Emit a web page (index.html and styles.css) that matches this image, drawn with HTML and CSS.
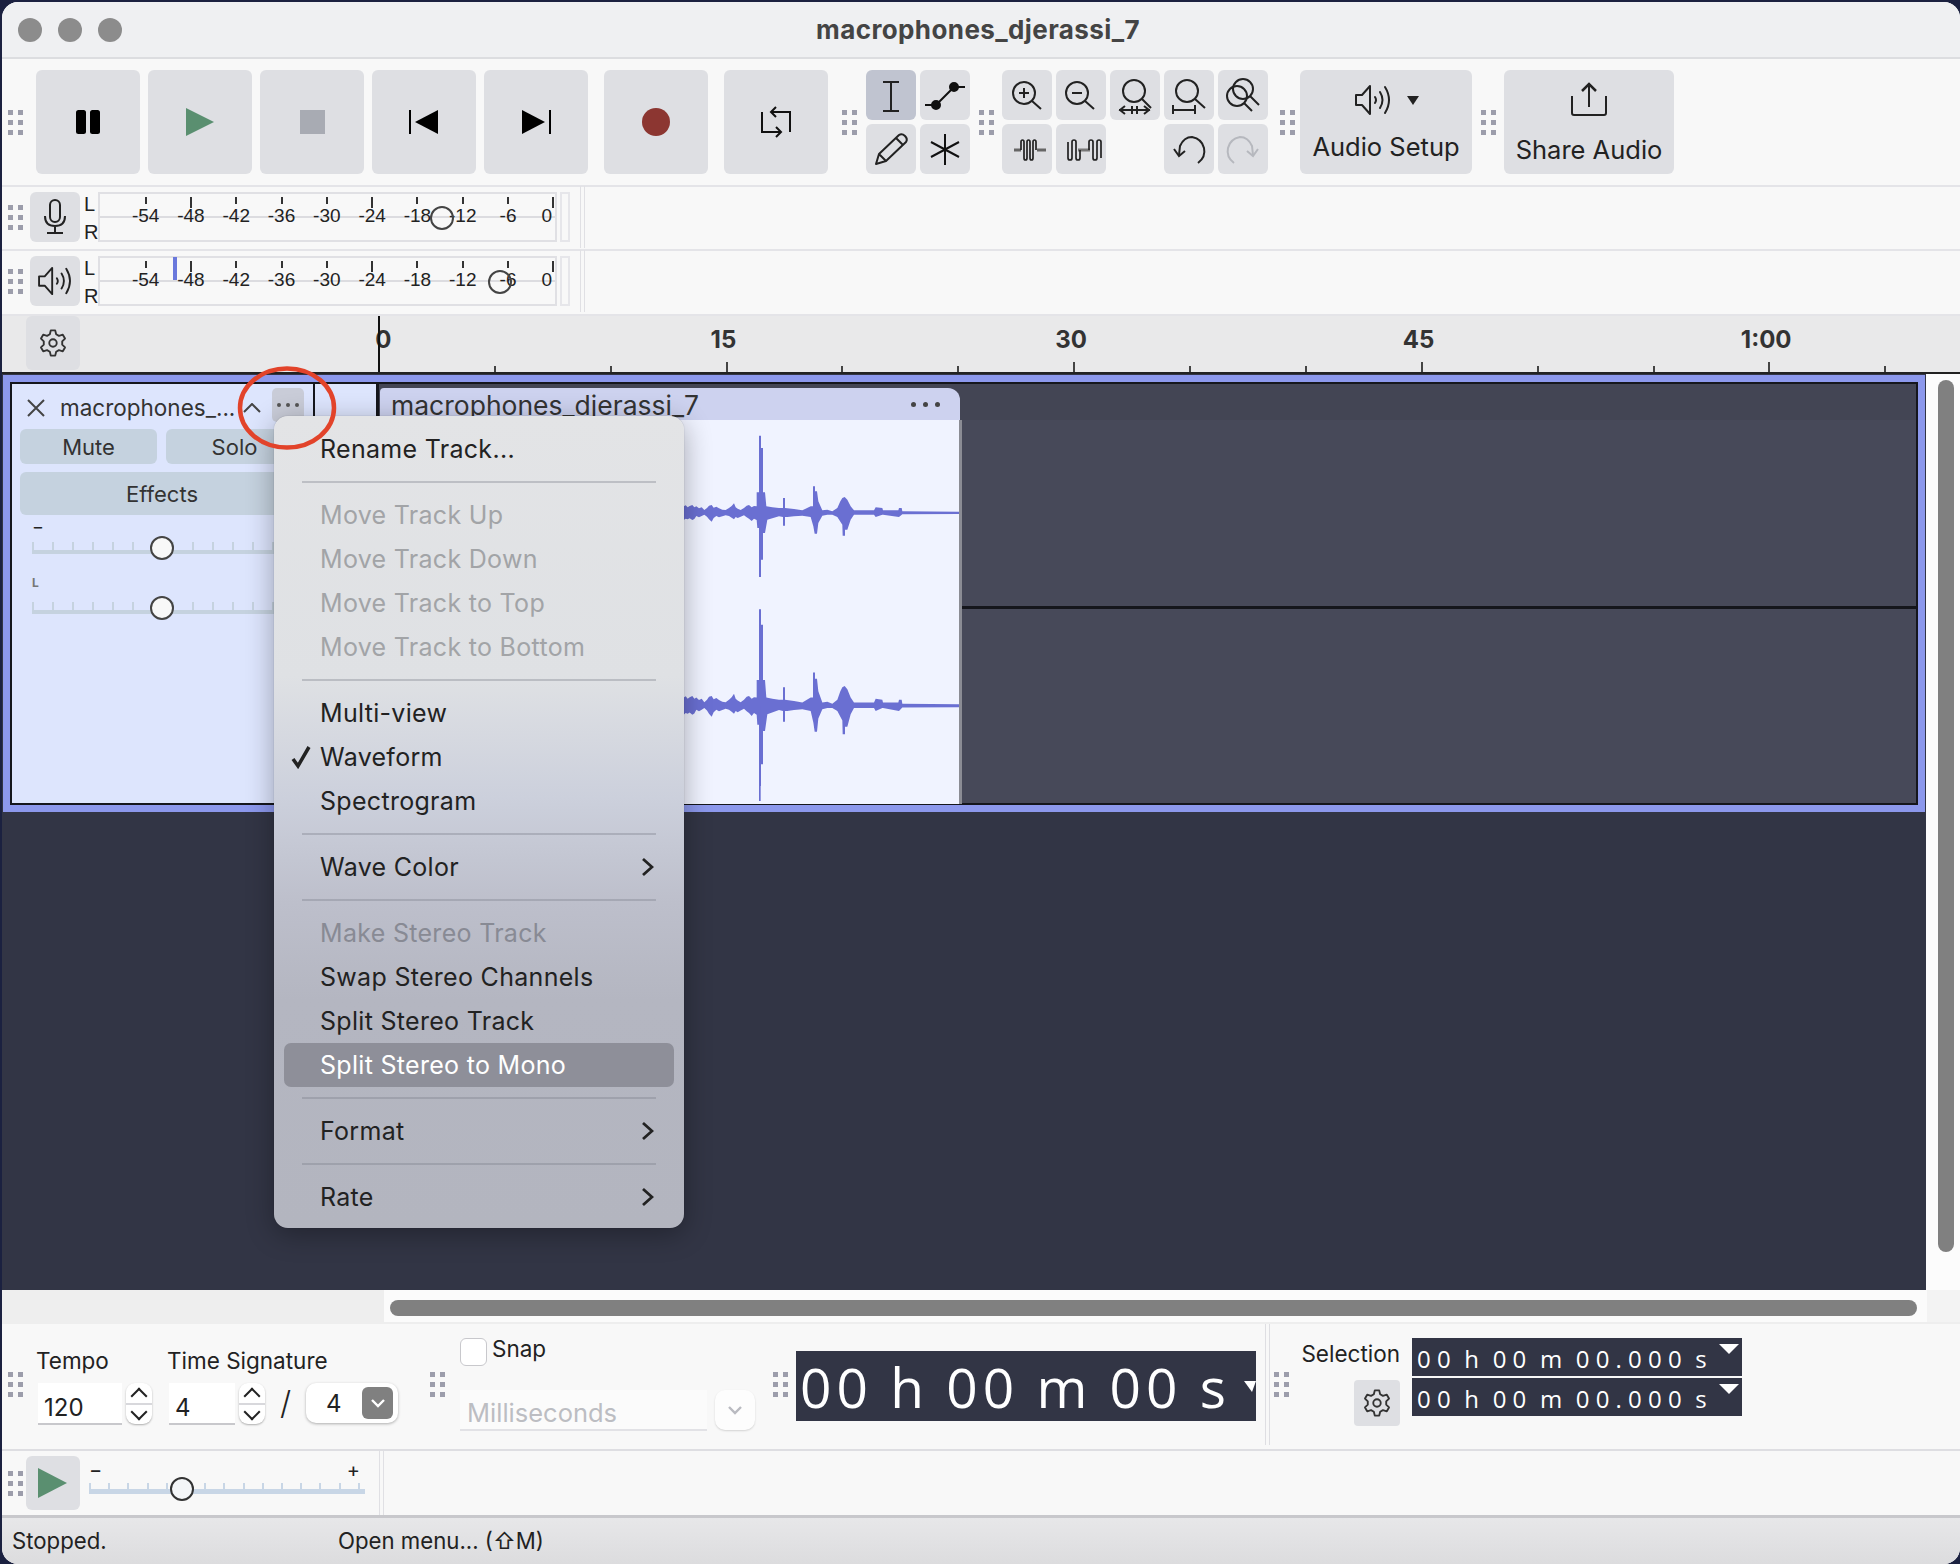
FILE: index.html
```html
<!DOCTYPE html>
<html lang="en">
<head>
    <meta charset="UTF-8">
    <title>macrophones_djerassi_7</title>
    <link rel="stylesheet" href="styles.css">
</head>
<body>

    <!-- Shared icons -->
    <svg class="defs" width="0" height="0">
        <symbol id="gear" viewBox="0 0 24 24">
            <polygon points="10.1,1.2 13.9,1.2 14.7,4.5 17.1,5.9 20.4,4.9 22.3,8.2 19.9,10.6 19.9,13.4 22.3,15.8 20.4,19.1 17.1,18.1 14.7,19.5 13.9,22.8 10.1,22.8 9.3,19.5 6.9,18.1 3.6,19.1 1.7,15.8 4.1,13.4 4.1,10.6 1.7,8.2 3.6,4.9 6.9,5.9 9.3,4.5" fill="none" stroke="#333" stroke-width="1.6" stroke-linejoin="round"/>
            <circle cx="12" cy="12" r="3.2" fill="none" stroke="#333" stroke-width="1.6"/>
        </symbol>
        <symbol id="speaker" viewBox="0 0 36 32">
            <path d="M1 11h6l8-9v28l-8-9H1z" fill="none" stroke="#222" stroke-width="2" stroke-linejoin="round"/>
            <path d="M20 13q2 3 0 6M25 8q5 8 0 16M30 3q8 13 0 26" fill="none" stroke="#222" stroke-width="2" stroke-linecap="round"/>
        </symbol>
        <symbol id="wave" viewBox="0 0 840 585">
            <polygon fill="#6a6fd2" points="0,261 6,258 10,263 14,259 20,256 26,262 32,258 40,255 46,262 52,259 60,265 68,262 76,270 84,264 90,257 98,255 104,263 112,260 120,265 130,269 140,270 150,264 158,258 165,250 170,262 176,266 185,270 195,264 203,257 210,255 218,262 225,258 233,259 233,217 240,217 240,47 246,47 246,84 252,84 252,217 258,217 262,259 280,262 300,264 312,264 312,234 318,234 318,264 345,267 370,271 395,259 402,259 402,199 408,199 408,214 414,214 418,244 430,271 445,269 460,274 475,264 484,244 490,234 497,231 505,239 515,259 525,271 585,271 590,262 610,264 612,271 658,271 660,264 668,264 670,274 840,275 840,282 670,283 660,291 612,284 610,284 590,291 585,284 525,284 515,299 505,329 498,329 498,347 491,347 490,314 475,291 460,284 445,284 430,287 418,309 414,341 407,341 403,319 395,291 370,287 345,289 325,291 318,291 318,317 312,317 312,291 300,289 265,299 258,339 252,339 252,419 246,419 246,471 240,471 240,324 235,324 233,300 225,296 218,303 210,296 203,292 195,286 185,290 176,294 170,291 165,298 158,293 150,288 140,286 130,289 120,292 112,288 104,294 98,305 90,298 84,290 76,284 68,288 60,292 52,288 46,297 40,300 32,295 26,298 20,296 14,300 10,295 6,298 0,297"/>
        </symbol>
        <symbol id="chevron" viewBox="0 0 13 20">
            <path d="M2 2l9 8-9 8" fill="none" stroke="#222" stroke-width="2.8"/>
        </symbol>
    </svg>

    <div class="window">

        <div class="titlebar">
            <div class="lights"><span></span><span></span><span></span></div>
            <div class="title">macrophones_djerassi_7</div>
        </div>

        <!-- Main toolbar -->
        <div class="toolbar">
            <div class="grip first-grip"></div>
            <div class="transport">
                <div class="tbtn">
                    <svg width="24" height="24" viewBox="0 0 24 24"><rect x="0" width="10" height="24" rx="2.5"/><rect x="14" width="10" height="24" rx="2.5"/></svg>
                </div>
                <div class="tbtn">
                    <svg width="28" height="28" viewBox="0 0 28 28"><polygon points="0,0 28,14 0,28" fill="#5a8f70"/></svg>
                </div>
                <div class="tbtn">
                    <svg width="25" height="24" viewBox="0 0 25 24"><rect width="25" height="24" fill="#a8abb3"/></svg>
                </div>
                <div class="tbtn">
                    <svg width="30" height="24" viewBox="0 0 30 24"><rect width="2" height="24"/><polygon points="6,12 29,0 29,24"/></svg>
                </div>
                <div class="tbtn">
                    <svg width="30" height="24" viewBox="0 0 30 24"><polygon points="1,0 24,12 1,24"/><rect x="28" width="2" height="24"/></svg>
                </div>
                <div class="tbtn spaced">
                    <svg width="28" height="28" viewBox="0 0 28 28"><circle cx="14" cy="14" r="14" fill="#8c3631"/></svg>
                </div>
                <div class="tbtn spaced">
                    <svg width="30" height="32" viewBox="0 0 30 32" fill="none" stroke="#111" stroke-width="2">
                        <path d="M11 6h18v20M19 26H1V6"/>
                        <path d="M15 1l-5 5 5 5M15 21l5 5-5 5"/>
                    </svg>
                </div>
            </div>

            <div class="grip tools-grip"></div>
            <div class="tools">
                <div class="sbtn active">
                    <svg width="50" height="50" viewBox="0 0 50 50" fill="none" stroke="#222" stroke-width="2"><path d="M25 13v28M17 12h16M17 41h16"/></svg>
                </div>
                <div class="sbtn">
                    <svg width="50" height="50" viewBox="0 0 50 50" fill="none" stroke="#111" stroke-width="2"><path d="M16 35l18-18M5 35h11M34 17h11"/><circle cx="16" cy="35" r="4" fill="#111"/><circle cx="34" cy="17" r="4" fill="#111"/></svg>
                </div>
                <div class="sbtn">
                    <svg width="50" height="50" viewBox="0 0 50 50" fill="none" stroke="#222" stroke-width="2" stroke-linejoin="round"><path d="M10 40l3-10 20-19q3-2 6 1t1 6L20 37zM13 30l7 7M30 14l7 7"/></svg>
                </div>
                <div class="sbtn">
                    <svg width="50" height="50" viewBox="0 0 50 50" fill="none" stroke="#111" stroke-width="2"><path d="M25 10v31M11 18l28 15M39 18L11 33"/></svg>
                </div>
            </div>

            <div class="grip tools-grip"></div>
            <div class="zooms">
                <div class="sbtn">
                    <svg width="50" height="50" viewBox="0 0 50 50" fill="none" stroke="#222" stroke-width="2"><circle cx="22" cy="23" r="11"/><path d="M30 31l9 8M17 23h10M22 18v10"/></svg>
                </div>
                <div class="sbtn">
                    <svg width="50" height="50" viewBox="0 0 50 50" fill="none" stroke="#222" stroke-width="2"><circle cx="21" cy="23" r="11"/><path d="M29 31l9 8M16 23h10"/></svg>
                </div>
                <div class="sbtn">
                    <svg width="50" height="50" viewBox="0 0 50 50" fill="none" stroke="#222" stroke-width="2"><circle cx="24" cy="21" r="11"/><path d="M32 29l9 9M9 40h31M15 36l-5 4 5 4M34 36l5 4-5 4M22 36v8M27 36v8"/></svg>
                </div>
                <div class="sbtn">
                    <svg width="50" height="50" viewBox="0 0 50 50" fill="none" stroke="#222" stroke-width="2"><circle cx="23" cy="21" r="11"/><path d="M31 29l10 9M9 40h22M9 35v9M31 35v9"/></svg>
                </div>
                <div class="sbtn">
                    <svg width="50" height="50" viewBox="0 0 50 50" fill="none" stroke="#222" stroke-width="2"><circle cx="25" cy="19" r="10"/><circle cx="19" cy="26" r="10"/><path d="M32 26l9 9M26 33l8 8"/></svg>
                </div>
                <div class="sbtn">
                    <svg width="50" height="50" viewBox="0 0 50 50" fill="none" stroke="#222" stroke-width="1.700"><path d="M12 26h7M35 26h9" stroke="#666" stroke-width="3"/><path d="M19 26v-8q0-2 1.500-2t1.500 2v16q0 2 1.500 2t1.500-2V18q0-2 1.500-2t1.500 2v16q0 2 1.500 2t1.500-2V18q0-2 1.500-2t1.500 2v8"/></svg>
                </div>
                <div class="sbtn">
                    <svg width="50" height="50" viewBox="0 0 50 50" fill="none" stroke="#222" stroke-width="1.700"><path d="M22 26h12" stroke="#777" stroke-width="3"/><path d="M12 18v16q0 2 2 2t2-2V18q0-2 2-2t2 2v16q0 2 2 2t2-2v-8M33 26v-8q0-2 2-2t2 2v16q0 2 2 2t2-2V18q0-2 2-2t2 2v16"/></svg>
                </div>
                <div class="sbtn empty"></div>
                <div class="sbtn">
                    <svg width="50" height="50" viewBox="0 0 50 50" fill="none" stroke="#222" stroke-width="2"><path d="M34 39q8-6 6-15T28 13q-8 0-12 9l-1 9"/><path d="M10 25l5 7 6-5"/></svg>
                </div>
                <div class="sbtn">
                    <svg width="50" height="50" viewBox="0 0 50 50" fill="none" stroke="#b6b8be" stroke-width="2"><path d="M16 39q-8-6-6-15t12-11q8 0 12 9l1 9"/><path d="M40 25l-5 7-6-5"/></svg>
                </div>
            </div>

            <div class="grip audio-grip"></div>
            <div class="wide-btn audio-btn">
                <div class="wide-icon">
                    <svg width="40" height="32"><use href="#speaker"/></svg>
                    <span class="caret"></span>
                </div>
                <div>Audio Setup</div>
            </div>
            <div class="grip share-grip"></div>
            <div class="wide-btn share-btn">
                <div class="wide-icon">
                    <svg width="36" height="36" viewBox="0 0 36 36" fill="none" stroke="#222" stroke-width="2"><path d="M1 15v17q0 2 2 2h30q2 0 2-2V15"/><path d="M18 26V3"/><path d="M11 10l7-7 7 7" stroke-width="2.5"/></svg>
                </div>
                <div>Share Audio</div>
            </div>
        </div>

        <!-- Recording and playback meters -->
        <div class="meter-row">
            <div class="grip first-grip"></div>
            <div class="meter-btn">
                <svg width="22" height="36" viewBox="0 0 22 36" fill="none" stroke="#222" stroke-width="2"><rect x="6" y="1" width="10" height="22" rx="5"/><path d="M1 17q0 10 10 10t10-10M11 27v6M3 34h16"/></svg>
            </div>
            <div class="lr"><span>L</span><span>R</span></div>
            <div class="meter">
                <div class="mark"><i></i><span>-54</span></div>
                <div class="mark"><i class="long"></i><span>-48</span></div>
                <div class="mark"><i></i><span>-42</span></div>
                <div class="mark"><i></i><span>-36</span></div>
                <div class="mark"><i></i><span>-30</span></div>
                <div class="mark"><i class="long"></i><span>-24</span></div>
                <div class="mark"><i></i><span>-18</span></div>
                <div class="mark"><i></i><span>-12</span></div>
                <div class="mark"><i></i><span>-6</span></div>
                <div class="mark last"><i class="long"></i><span>0</span></div>
                <div class="meter-thumb input-gain"></div>
            </div>
            <div class="mini-meter"></div>
            <div class="meter-sep"></div>
        </div>
        <div class="meter-row second">
            <div class="grip first-grip"></div>
            <div class="meter-btn">
                <svg width="34" height="30"><use href="#speaker"/></svg>
            </div>
            <div class="lr"><span>L</span><span>R</span></div>
            <div class="meter">
                <div class="level-bar"></div>
                <div class="mark"><i></i><span>-54</span></div>
                <div class="mark"><i class="long"></i><span>-48</span></div>
                <div class="mark"><i></i><span>-42</span></div>
                <div class="mark"><i></i><span>-36</span></div>
                <div class="mark"><i></i><span>-30</span></div>
                <div class="mark"><i class="long"></i><span>-24</span></div>
                <div class="mark"><i></i><span>-18</span></div>
                <div class="mark"><i></i><span>-12</span></div>
                <div class="mark"><i></i><span>-6</span></div>
                <div class="mark last"><i class="long"></i><span>0</span></div>
                <div class="meter-thumb output-gain"></div>
            </div>
            <div class="mini-meter"></div>
            <div class="meter-sep"></div>
        </div>

        <!-- Timeline ruler -->
        <div class="ruler">
            <div class="gear-btn"><svg width="28" height="28"><use href="#gear"/></svg></div>
            <div class="ruler-labels">
                <span class="zero">0</span>
                <span>15</span>
                <span>30</span>
                <span>45</span>
                <span>1:00</span>
            </div>
            <div class="ruler-ticks"></div>
        </div>

        <!-- Track area -->
        <div class="main">
            <div class="tracks">
                <div class="track">
                    <div class="track-inner">
                        <div class="panel">
                            <div class="panel-head">
                                <svg class="close-x" width="18" height="18" viewBox="0 0 18 18" stroke="#444" stroke-width="2"><path d="M1 1l16 16M17 1L1 17"/></svg>
                                <span class="track-name">macrophones_...</span>
                                <svg class="collapse" width="18" height="10" viewBox="0 0 18 10" fill="none" stroke="#444" stroke-width="2"><path d="M1 9l8-8 8 8"/></svg>
                                <div class="more-btn"><span></span><span></span><span></span></div>
                                <div class="panel-rule"></div>
                            </div>
                            <div class="panel-btns">
                                <div class="pbtn">Mute</div>
                                <div class="pbtn">Solo</div>
                            </div>
                            <div class="pbtn effects">Effects</div>
                            <div class="slider-label">&minus;</div>
                            <div class="pslider"><div class="pthumb"></div></div>
                            <div class="slider-label pan">L</div>
                            <div class="pslider"><div class="pthumb"></div></div>
                        </div>
                        <div class="lane">
                            <div class="clip">
                                <div class="clip-head">
                                    <span>macrophones_djerassi_7</span>
                                    <div class="clip-dots"><span></span><span></span><span></span></div>
                                </div>
                                <div class="clip-body">
                                    <div class="channel"><svg width="280" height="195"><use href="#wave"/></svg></div>
                                    <div class="channel lower">
                                        <svg width="280" height="195" viewBox="0 0 840 585">
                                            <use href="#wave" width="840" height="585" transform="translate(0 -58) scale(1 1.25)"/>
                                            <rect x="240" y="291" width="5" height="285" fill="#6a6fd2"/>
                                        </svg>
                                    </div>
                                </div>
                            </div>
                        </div>
                    </div>
                </div>
            </div>
            <div class="vscroll"><div class="vthumb"></div></div>
        </div>

        <div class="hscroll">
            <div class="hscroll-left"></div>
            <div class="hscroll-track"><div class="hthumb"></div></div>
        </div>

        <!-- Bottom toolbar -->
        <div class="bottom">
            <div class="grip first-grip"></div>
            <div class="field tempo">
                <label>Tempo</label>
                <div class="field-row">
                    <div class="num wide">120</div>
                    <div class="spin"><span class="up"></span><span class="down"></span></div>
                </div>
            </div>
            <div class="field timesig">
                <label>Time Signature</label>
                <div class="field-row">
                    <div class="num">4</div>
                    <div class="spin"><span class="up"></span><span class="down"></span></div>
                    <div class="slash">/</div>
                    <div class="select">
                        <span>4</span>
                        <div class="select-arrow"><svg width="14" height="9" viewBox="0 0 14 9" fill="none" stroke="#fff" stroke-width="2.4"><path d="M1 1l6 6 6-6"/></svg></div>
                    </div>
                </div>
            </div>
            <div class="grip snap-grip"></div>
            <div class="snap">
                <div class="snap-check"><span class="box"></span><span>Snap</span></div>
                <div class="snap-row">
                    <div class="snap-select">Milliseconds</div>
                    <div class="snap-arrow"><svg width="14" height="9" viewBox="0 0 14 9" fill="none" stroke="#b9bac0" stroke-width="2.4"><path d="M1 1l6 6 6-6"/></svg></div>
                </div>
            </div>
            <div class="grip clock-grip"></div>
            <div class="clock"><span class="clock-text">00 h 00 m 00 s</span><span class="clock-caret"></span></div>
            <div class="bottom-sep"></div>
            <div class="grip sel-grip"></div>
            <div class="selection">
                <div class="sel-side">
                    <div class="sel-label">Selection</div>
                    <div class="sel-gear"><svg width="28" height="28"><use href="#gear"/></svg></div>
                </div>
                <div class="sel-clocks">
                    <div class="small-clock"><span>00 h 00 m 00.000 s</span><i class="clock-caret small"></i></div>
                    <div class="small-clock"><span>00 h 00 m 00.000 s</span><i class="clock-caret small"></i></div>
                </div>
            </div>
        </div>

        <!-- Play at speed -->
        <div class="speed-row">
            <div class="grip speed-grip"></div>
            <div class="speed-btn">
                <svg width="30" height="30" viewBox="0 0 30 30"><polygon points="0,0 29,15 0,30" fill="#5a8f70"/></svg>
            </div>
            <div class="speed-slider">
                <div class="speed-signs"><span>&minus;</span><span>+</span></div>
                <div class="speed-track"><div class="speed-thumb"></div></div>
            </div>
            <div class="speed-sep"></div>
        </div>

        <div class="statusbar">
            <span class="status-left">Stopped.</span>
            <span>Open menu... (⇧M)</span>
        </div>

        <!-- Track context menu -->
        <div class="menu">
            <div class="item">Rename Track...</div>
            <div class="sep"></div>
            <div class="item off">Move Track Up</div>
            <div class="item off">Move Track Down</div>
            <div class="item off">Move Track to Top</div>
            <div class="item off">Move Track to Bottom</div>
            <div class="sep"></div>
            <div class="item">Multi-view</div>
            <div class="item">
                <svg class="check" width="22" height="24" viewBox="0 0 22 24" fill="none" stroke="#222" stroke-width="3.5"><path d="M3 14l5 7L19 2"/></svg>
                Waveform
            </div>
            <div class="item">Spectrogram</div>
            <div class="sep"></div>
            <div class="item sub">Wave Color<svg width="13" height="20"><use href="#chevron"/></svg></div>
            <div class="sep"></div>
            <div class="item off dim">Make Stereo Track</div>
            <div class="item">Swap Stereo Channels</div>
            <div class="item">Split Stereo Track</div>
            <div class="item hot">Split Stereo to Mono</div>
            <div class="sep"></div>
            <div class="item sub">Format<svg width="13" height="20"><use href="#chevron"/></svg></div>
            <div class="sep"></div>
            <div class="item sub">Rate<svg width="13" height="20"><use href="#chevron"/></svg></div>
        </div>

        <!-- Red annotation ring -->
        <svg class="ring" width="104" height="88" viewBox="0 0 104 88"><ellipse cx="52" cy="44" rx="47" ry="39.500" fill="none" stroke="#e2432a" stroke-width="4.500"/></svg>

    </div>

</body>
</html>
```

FILE: styles.css
```css
/* Page and window */
* {
    box-sizing: border-box;
}
html, body {
    margin: 0;
    height: 100%;
}
body {
    background: #1b2140;
    padding: 2px 0 0 2px;
    width: 1960px;
    height: 1564px;
    overflow: hidden;
    font-family: Inter, "Liberation Sans", sans-serif;
    color: #222;
}
.defs {
    position: absolute;
}
.window {
    position: relative;
    width: 1958px;
    height: 1562px;
    display: flex;
    flex-direction: column;
    background: #f8f8f8;
    border-radius: 16px;
    overflow: hidden;
}

/* Title bar */
.titlebar {
    height: 57px;
    flex: none;
    display: flex;
    align-items: center;
    padding-left: 16px;
    background: #eff0f2;
    border-bottom: 2px solid #dcdde0;
}
.lights {
    display: flex;
    gap: 16px;
}
.lights span {
    width: 24px;
    height: 24px;
    border-radius: 50%;
    background: #8c8c8c;
}
.title {
    flex: 1;
    padding-right: 126px;
    text-align: center;
    font-size: 26px;
    font-weight: 700;
    letter-spacing: 0.4px;
    color: #444;
}

/* Drag grips */
.grip {
    flex: none;
    width: 15px;
    height: 25px;
    background: conic-gradient(#9c9dab 25%, transparent 0) -5px 0 / 10px 10px;
}
.first-grip {
    margin-left: 6px;
}

/* Main toolbar */
.toolbar {
    height: 128px;
    flex: none;
    display: flex;
    align-items: center;
    border-bottom: 2px solid #e4e4e8;
}
.transport {
    display: flex;
    gap: 8px;
    margin-left: 13px;
}
.tbtn {
    width: 104px;
    height: 104px;
    display: flex;
    align-items: center;
    justify-content: center;
    background: #dedfe3;
    border-radius: 6px;
}
.tbtn.spaced {
    margin-left: 8px;
}
.tools-grip {
    margin-left: 14px;
}
.tools {
    display: grid;
    grid-template-columns: 50px 50px;
    gap: 4px;
    margin-left: 9px;
}
.tools + .grip {
    margin-left: 9px;
}
.zooms {
    display: grid;
    grid-template-columns: repeat(5, 50px);
    gap: 4px;
    margin-left: 8px;
}
.sbtn {
    width: 50px;
    height: 50px;
    background: #dedfe3;
    border-radius: 6px;
}
.sbtn svg {
    display: block;
}
.sbtn.active {
    background: #c0c4d0;
}
.sbtn.empty {
    background: none;
}
.audio-grip {
    margin-left: 12px;
}
.share-grip {
    margin-left: 9px;
}
.wide-btn {
    height: 104px;
    display: flex;
    flex-direction: column;
    align-items: center;
    justify-content: space-between;
    padding: 12px 0 12px;
    background: #dedfe3;
    border-radius: 6px;
    font-size: 25.500px;
    color: #222;
}
.audio-btn {
    width: 172px;
    margin-left: 5px;
}
.share-btn {
    width: 170px;
    margin-left: 8px;
    padding-top: 11px;
    padding-bottom: 9px;
}
.wide-icon {
    display: flex;
    align-items: center;
    gap: 14px;
    height: 36px;
}
.wide-icon svg {
    display: block;
}
.caret {
    width: 0;
    height: 0;
    border-left: 6px solid transparent;
    border-right: 6px solid transparent;
    border-top: 9px solid #222;
}

/* Meters */
.meter-row {
    height: 64px;
    flex: none;
    display: flex;
    align-items: center;
    border-bottom: 2px solid #e4e4e8;
    padding-bottom: 2px;
}
.meter-row.second {
    height: 65px;
    padding-bottom: 3px;
}
.meter-btn {
    width: 50px;
    height: 50px;
    margin-left: 7px;
    display: flex;
    align-items: center;
    justify-content: center;
    background: #dedfe3;
    border-radius: 6px;
}
.lr {
    width: 14px;
    height: 50px;
    margin-left: 4px;
    display: flex;
    flex-direction: column;
    justify-content: space-between;
    font-family: "Liberation Sans", sans-serif;
    font-size: 20px;
    line-height: 25px;
}
.lr span:last-child {
    margin-top: 3px;
}
.meter {
    position: relative;
    width: 459px;
    height: 50px;
    display: flex;
    padding-left: 23px;
    border: 2px solid #e0e0e4;
    background: linear-gradient(#dcdce0 0 0) 0 22px / 100% 2px no-repeat;
}
.mark {
    width: 45.3px;
    flex: none;
    display: flex;
    flex-direction: column;
    align-items: center;
    font-family: "Liberation Sans", sans-serif;
    font-size: 19px;
}
.mark i {
    width: 2px;
    height: 7px;
    margin-top: 3px;
    background: #333;
}
.mark i.long {
    height: 11px;
}
.mark span {
    position: relative;
    line-height: 22px;
    top: 10px;
}
.mark i + span {
    top: 1px;
}
.mark i.long + span {
    top: -3px;
}
.mark.last span {
    margin-right: 13px;
}
.meter-thumb {
    position: absolute;
    top: 12px;
    width: 24px;
    height: 24px;
    border: 2px solid #444;
    border-radius: 50%;
}
.input-gain {
    left: 330px;
}
.output-gain {
    left: 388px;
}
.level-bar {
    position: absolute;
    left: 73px;
    top: -1px;
    width: 4px;
    height: 23px;
    background: #6a78dc;
}
.mini-meter {
    width: 10px;
    height: 50px;
    margin-left: 3px;
    border: 2px solid #e6e6ea;
}
.meter-sep {
    width: 5px;
    height: 62px;
    margin-left: 10px;
    border-left: 1px solid #e0e0e4;
    border-right: 1px solid #e0e0e4;
}

/* Ruler */
.ruler {
    position: relative;
    height: 58px;
    flex: none;
    display: flex;
    background: #e9e9ea;
    border-bottom: 2px solid #222;
    overflow: hidden;
}
.gear-btn {
    width: 54px;
    height: 54px;
    margin-left: 24px;
    flex: none;
    display: flex;
    align-items: center;
    justify-content: center;
    background: #dedfe3;
    border-radius: 6px;
}
.ruler-labels {
    display: flex;
    margin-left: 122px;
    padding-top: 9px;
    font-size: 24px;
    font-weight: 700;
    color: #333;
}
.ruler-labels span {
    width: 347.6px;
    flex: none;
    text-align: center;
}
.ruler-labels .zero {
    padding-left: 15px;
}
.ruler-ticks {
    position: absolute;
    left: 376px;
    right: 0;
    top: 0;
    bottom: 0;
    border-left: 2px solid #111;
    background:
        repeating-linear-gradient(90deg, #444 0 2px, transparent 2px 347.6px) -2px 100% / 100% 10px no-repeat,
        repeating-linear-gradient(90deg, #444 0 2px, transparent 2px 115.87px) -2px 100% / 100% 6px no-repeat;
}

/* Track area */
.main {
    height: 916px;
    flex: none;
    display: flex;
}
.tracks {
    width: 1924px;
    flex: none;
    background: #323545;
    padding: 1px 0 0 1px;
}
.track {
    height: 437px;
    width: 1922px;
    border: 7px solid #8c98ec;
}
.track-inner {
    height: 100%;
    display: flex;
    border: 2px solid #15161c;
}
.panel {
    width: 367px;
    flex: none;
    background: #dde5fd;
    border-right: 3px solid #15161c;
    padding-left: 8px;
}
.panel-head {
    height: 36px;
    display: flex;
    align-items: center;
    padding-top: 11px;
    font-size: 22.500px;
    color: #333;
}
.close-x {
    margin-left: 7px;
}
.track-name {
    margin-left: 15px;
    width: 183px;
    flex: none;
    white-space: nowrap;
}
.collapse {
    margin-left: 0;
}
.more-btn {
    width: 32px;
    height: 34px;
    margin-left: 11px;
    margin-top: -6px;
    display: flex;
    align-items: center;
    justify-content: center;
    gap: 5px;
    background: #c9ccd8;
    border-radius: 5px;
}
.more-btn span {
    width: 4px;
    height: 4px;
    border-radius: 50%;
    background: #555;
}
.panel-rule {
    width: 2px;
    height: 36px;
    margin-left: 9px;
    margin-top: -11px;
    background: #15161c;
}
.panel-btns {
    display: flex;
    gap: 9px;
    margin-top: 9px;
}
.pbtn {
    width: 137px;
    height: 35px;
    display: flex;
    align-items: center;
    justify-content: center;
    background: #c5d2df;
    border-radius: 6px;
    font-size: 22px;
    color: #333;
}
.effects {
    width: 284px;
    height: 43px;
    margin-top: 8px;
}
.slider-label {
    margin-left: 12px;
    height: 27px;
    padding-top: 2px;
    font-size: 18px;
    line-height: 20px;
}
.slider-label.pan {
    margin-top: 17px;
    font-size: 12px;
    font-weight: 700;
    color: #777;
    height: 31px;
}
.pslider {
    position: relative;
    width: 268px;
    height: 12px;
    margin-left: 12px;
    border-bottom: 4px solid #c5d2df;
    background: repeating-linear-gradient(90deg, #c5d2df 0 2px, transparent 2px 20px) 0 0 / 100% 8px no-repeat;
}
.pthumb {
    position: absolute;
    left: 118px;
    top: -6px;
    width: 24px;
    height: 24px;
    background: #f8f8f8;
    border: 2px solid #444;
    border-radius: 50%;
}
.lane {
    flex: 1;
    background:
        linear-gradient(#15161c 0 0) 0 222px / 100% 3px no-repeat,
        linear-gradient(#434554 36px, #474959 36px);
}
.clip {
    position: relative;
    width: 582px;
    margin-left: 1px;
    padding-top: 4px;
}
.clip-head {
    width: 580px;
    height: 32px;
    display: flex;
    align-items: center;
    justify-content: space-between;
    padding: 2px 20px 0 11px;
    background: #cdd2ef;
    border-radius: 4px 12px 0 0;
    font-size: 26.500px;
    color: #333;
}
.clip-dots {
    display: flex;
    gap: 7px;
    margin-top: -2px;
}
.clip-dots span {
    width: 5px;
    height: 5px;
    border-radius: 50%;
    background: #444;
}
.clip-body {
    width: 582px;
    height: 384px;
    border-right: 3px solid #8b8c94;
    background: #f0f3ff;
}
.channel {
    height: 186px;
    padding-left: 299px;
    overflow: hidden;
}
.channel.lower {
    height: 195px;
    margin-top: 3px;
}
.channel svg {
    display: block;
}
.vscroll {
    flex: 1;
    padding: 6px 0 0 12px;
    background: #fcfcfc;
}
.vthumb {
    width: 16px;
    height: 872px;
    background: #808080;
    border-radius: 8px;
}

/* Horizontal scrollbar */
.hscroll {
    height: 32px;
    flex: none;
    display: flex;
    background: #f3f3f3;
}
.hscroll-left {
    width: 382px;
    background: #eeeeee;
}
.hscroll-track {
    width: 1543px;
    padding: 10px 0 0 6px;
    background: #fbfbfb;
}
.hthumb {
    width: 1527px;
    height: 16px;
    background: #808080;
    border-radius: 8px;
}

/* Bottom toolbar */
.bottom {
    height: 129px;
    flex: none;
    display: flex;
    align-items: center;
    padding-bottom: 4px;
    border-top: 2px solid #eeeeee;
    border-bottom: 2px solid #dedee2;
    font-size: 22.500px;
}
.field {
    display: flex;
    flex-direction: column;
    height: 100%;
    padding-top: 23px;
}
.tempo {
    margin-left: 15px;
    width: 131px;
}
.tempo label {
    margin-left: -2px;
}
.timesig {
    width: 229px;
}
.timesig label {
    margin-left: -2px;
}
.field-row {
    display: flex;
    align-items: flex-start;
    margin-top: 9px;
}
.num {
    width: 66px;
    height: 42px;
    padding-left: 6px;
    background: #fff;
    border-bottom: 2px solid #c8c8cc;
    font-size: 24px;
    line-height: 50px;
}
.num.wide {
    width: 84px;
}
.spin {
    width: 26px;
    height: 41px;
    margin-left: 4px;
    display: flex;
    flex-direction: column;
    background: #fff;
    border-radius: 9px;
    box-shadow: 0 1px 2px rgba(0, 0, 0, 0.3);
}
.spin span {
    flex: 1;
    position: relative;
}
.spin .up {
    border-bottom: 2px solid #d8d8dc;
}
.spin span::after {
    content: "";
    position: absolute;
    left: 7px;
    top: 7px;
    width: 10px;
    height: 10px;
    border-left: 2.400px solid #222;
    border-top: 2.400px solid #222;
    transform: rotate(45deg);
}
.spin .down::after {
    top: 1px;
    transform: rotate(225deg);
}
.slash {
    width: 41px;
    text-align: center;
    font-size: 32px;
    line-height: 40px;
    font-weight: 300;
}
.select {
    width: 92px;
    height: 40px;
    display: flex;
    align-items: center;
    padding: 0 5px 0 20px;
    justify-content: space-between;
    background: #fff;
    border-radius: 10px;
    box-shadow: 0 1px 3px rgba(0, 0, 0, 0.3);
    font-size: 24px;
}
.select-arrow {
    width: 31px;
    height: 32px;
    display: flex;
    align-items: center;
    justify-content: center;
    background: #808080;
    border-radius: 6px;
}
.snap-grip {
    margin-left: 32px;
}
.snap {
    width: 295px;
    height: 100%;
    margin-left: 15px;
    padding-top: 14px;
    flex: none;
}
.snap-check {
    display: flex;
    gap: 5px;
    height: 28px;
}
.snap-check span:last-child {
    margin-top: -3px;
}
.box {
    width: 27px;
    height: 28px;
    background: #fff;
    border: 1px solid #c8c8cc;
    border-radius: 6px;
}
.snap-row {
    display: flex;
    gap: 8px;
    margin-top: 24px;
}
.snap-select {
    width: 247px;
    height: 41px;
    padding-left: 7px;
    background: #fbfbfb;
    border-bottom: 2px solid #e2e2e6;
    color: #bcbdc2;
    font-size: 25.500px;
    line-height: 46px;
}
.snap-arrow {
    width: 40px;
    height: 40px;
    display: flex;
    align-items: center;
    justify-content: center;
    background: #fdfdfd;
    border-radius: 10px;
    box-shadow: 0 1px 2px rgba(0, 0, 0, 0.15);
}
.clock-grip {
    margin-left: 18px;
}
.clock {
    position: relative;
    width: 460px;
    height: 70px;
    margin-top: 2px;
    margin-left: 8px;
    flex: none;
    padding-left: 4px;
    background: #323545;
    color: #fff;
    font-family: "Open Sans", sans-serif;
    font-size: 55px;
    line-height: 72px;
    white-space: pre;
}
.clock-text {
    letter-spacing: 5px;
    word-spacing: -2px;
}
.clock-caret {
    position: absolute;
    right: 0;
    top: 30px;
    width: 0;
    height: 0;
    border-left: 8px solid transparent;
    border-right: 4px solid transparent;
    border-top: 11px solid #fff;
}
.bottom-sep {
    width: 5px;
    height: 100%;
    margin-left: 9px;
    border-left: 1px solid #dedee2;
    border-right: 1px solid #dedee2;
}
.sel-grip {
    margin-left: 4px;
}
.selection {
    display: flex;
    margin-left: 14px;
    height: 100%;
    padding-top: 14px;
}
.sel-side {
    width: 97px;
    display: flex;
    flex-direction: column;
    align-items: flex-end;
}
.sel-label {
    margin-top: 2px;
    height: 40px;
}
.sel-gear {
    width: 46px;
    height: 46px;
    display: flex;
    align-items: center;
    justify-content: center;
    background: #dedfe3;
    border-radius: 4px;
}
.sel-clocks {
    margin-left: 12px;
    display: flex;
    flex-direction: column;
    gap: 2px;
}
.small-clock {
    position: relative;
    width: 330px;
    height: 38px;
    padding-left: 5px;
    background: #323545;
    color: #fff;
    font-family: "Open Sans", sans-serif;
    font-size: 24px;
    line-height: 42px;
    letter-spacing: 6.2px;
    word-spacing: -5px;
    white-space: pre;
    overflow: hidden;
}
.clock-caret.small {
    right: 3px;
    top: 6px;
    border-left-width: 10px;
    border-right-width: 10px;
    border-top-width: 10px;
}

/* Play at speed */
.speed-row {
    height: 67px;
    flex: none;
    display: flex;
    align-items: center;
    border-bottom: 3px solid #c8c8cc;
}
.speed-grip {
    margin-left: 6px;
}
.speed-btn {
    width: 54px;
    height: 54px;
    margin-left: 3px;
    display: flex;
    align-items: center;
    justify-content: center;
    background: #dedfe3;
    border-radius: 6px;
}
.speed-slider {
    width: 276px;
    margin-left: 9px;
    margin-top: -6px;
}
.speed-signs {
    display: flex;
    justify-content: space-between;
    margin-top: -8px;
    height: 26px;
    font-size: 20px;
    line-height: 22px;
}
.speed-signs span:last-child {
    margin-right: 5px;
}
.speed-track {
    position: relative;
    height: 11px;
    margin-top: -2px;
    border-bottom: 5px solid #c8d6e6;
    background: repeating-linear-gradient(90deg, #c8d6e6 0 2px, transparent 2px 19.2px) 0 0 / 100% 8px no-repeat;
}
.speed-thumb {
    position: absolute;
    left: 81px;
    top: -6px;
    width: 24px;
    height: 24px;
    background: #f4f6f8;
    border: 2px solid #333;
    border-radius: 50%;
}
.speed-sep {
    width: 5px;
    height: 64px;
    margin-left: 14px;
    border-left: 1px solid #e0e0e4;
    border-right: 1px solid #e0e0e4;
}

/* Status bar */
.statusbar {
    flex: 1;
    display: flex;
    align-items: center;
    padding-left: 10px;
    padding-bottom: 2px;
    background: linear-gradient(#e7e7e9, #dcdcde);
    font-size: 22.200px;
    color: #222;
}
.status-left {
    width: 326px;
}

/* Context menu */
.menu {
    position: absolute;
    left: 272px;
    top: 414px;
    width: 410px;
    height: 812px;
    padding: 11px 10px;
    border-radius: 14px;
    background: linear-gradient(#e3e4e6, #dfe1e4 32%, #ccd0dc 47%, #bdbfcb 60%, #b4b6c1 72%, #b3b5bf);
    box-shadow: 0 6px 28px rgba(0, 0, 0, 0.32), 0 0 1px rgba(0, 0, 0, 0.4);
    font-size: 25px;
    letter-spacing: 0.3px;
}
.item {
    position: relative;
    height: 44px;
    display: flex;
    align-items: center;
    justify-content: space-between;
    padding: 0 20px 0 36px;
    border-radius: 7px;
    color: #222;
}
.item.off {
    color: #a2a4a7;
}
.item.dim {
    color: #888a94;
}
.item.hot {
    background: #8e8f99;
    color: #fff;
}
.check {
    position: absolute;
    left: 6px;
    top: 10px;
}
.sep {
    height: 2px;
    margin: 10px 18px;
    background: rgba(120, 122, 135, 0.35);
}
.ring {
    position: absolute;
    left: 233px;
    top: 362px;
}
```
